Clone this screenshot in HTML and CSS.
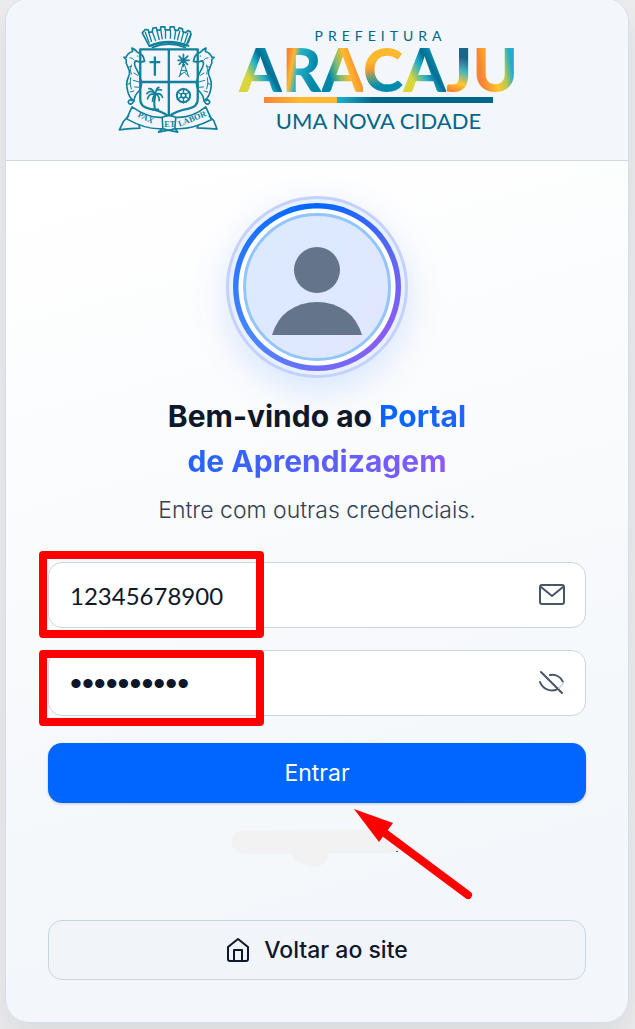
FILE: index.html
```html
<!DOCTYPE html>
<html lang="pt-BR">
<head>
  <meta charset="UTF-8" />
  <meta name="viewport" content="width=device-width, initial-scale=1.0"/>
  <title>Portal de Aprendizagem</title>
  <link rel="stylesheet" href="styles.css">
</head>
<body>

  <main class="card">
    <header class="brand">
      <svg class="crest" viewBox="24 30 304 330" fill="none" stroke="#12809b" stroke-width="5" stroke-linecap="round" stroke-linejoin="round" aria-hidden="true">
        <!-- mural crown -->
        <path d="M97 53l9-10 9 1 2 8 10-2 2-11 10-2 3 9 10-2 1-9h12l1 9h14l1-9h12l2 10 10 1 3-8 10 3 1 9 9 3 6-7 8 4 1 8-14 34q-57-20-111 1z" />
        <path d="M116 51l9 28M127 49l10 27M141 46l7 27M153 44l4 27M167 44v25M182 44v25M198 45l-4 26M210 48l-7 26M222 50l-8 28M234 54l-9 28M244 58l-8 25M106 51l12 33" stroke-width="4" />
        <path d="M128 97q48-20 98 0M120 92q55-24 116 0" stroke-width="6" />
        <!-- shield -->
        <path d="M91 103h173v150q0 23-27 28-40 7-60 24-20-17-60-24-26-5-26-28zM177 103v202M91 201h173" stroke-width="7" />
        <path d="M135 124v58M119 141h32" stroke-width="7" stroke-linecap="butt" />
        <!-- windmill -->
        <path d="M221 136v-18M221 136l13-13M221 136h17M221 136l12 12M221 136v18M221 136l-13 12M221 136h-16M221 136l-13-13" stroke-width="5" />
        <path d="M219 148l-10 36M224 148l12 36M214 166h15M212 178l20-10M207 184l9-7M238 184l-10-8" stroke-width="3" />
        <!-- palm -->
        <path d="M136 240q-5 24-1 43M128 284h17" stroke-width="6" />
        <path d="M136 237q-14-15-25-1M136 237q-19-3-23 15M136 237q-7 7-8 22M136 237q2-17 19-12M136 237q17-5 22 10M136 237q13 4 12 20M134 236q-6-16-17-15M137 235q2-17 10-18" stroke-width="5" />
        <!-- wheel -->
        <circle cx="221" cy="242" r="20" stroke-width="6" />
        <circle cx="221" cy="242" r="7" />
        <path d="M221 220v15M221 249v15M202 231l13 7M227 246l13 7M240 231l-13 7M215 246l-13 7" stroke-width="4" />
        <!-- seahorses -->
        <g id="seahorse">
          <path d="M104 138q-3-21-22-27-7-9-16-12l2 10q-15 4-19 17l-7 1 7 7q-3 10 4 20l5 13q3 10-3 20-8 17-3 36 4 24 20 35-6 12-13 9-7-4-2-10 5-4 8 0" />
          <path d="M103 139q-13 4-25-2-8 6-1 20 11 18 17 41 3 18-7 30-14 14-15 30" />
          <path d="M82 123h2M60 128q8-1 13 7M64 150q-6 14 0 27M62 188q-5 17 2 34M72 174l11 7M70 196l18 5M74 216l14 1M57 156l8-3M53 208l9-3M61 231l11-3" stroke-width="3" />
        </g>
        <use href="#seahorse" transform="matrix(-1 0 0 1 355 0)" />
        <!-- ribbon -->
        <path d="M66 276q51 35 91 31l2 34q-48 5-109-29zM288 276q-42 35-90 31l-3 34q49 5 111-27zM157 307q21-10 41 0l-3 34q-17 9-36 0z" fill="#f3f7fd" />
        <path d="M56 303l-15 16-13 26q38-4 62-5l-3-9M299 304l13 13 10 26q-37-3-60-4l4-8M159 341l-13 11 30-6 28 6-8-11" />
        <g class="motto">
          <text x="82" y="305" transform="rotate(26 82 305)">PAX</text>
          <text x="163" y="337">ET</text>
          <text x="209" y="336" transform="rotate(-22 209 336)">LABOR</text>
        </g>
      </svg>

      <div class="wordmark">
        <span class="prefeitura">PREFEITURA</span>
        <span class="aracaju"><span class="l1">A</span><span class="l2">R</span><span class="l3">A</span><span class="l4">C</span><span class="l5">A</span><span class="l6">J</span><span class="l7">U</span></span>
        <span class="stripe"></span>
        <span class="slogan">UMA NOVA CIDADE</span>
      </div>
    </header>

    <section class="login">
      <div class="avatar">
        <div class="avatar-ring">
          <svg viewBox="0 0 142 142" aria-hidden="true">
            <circle cx="71" cy="54" r="23" />
            <path d="M26 119q5-16 16-24 13-9 29-9t29 9q11 8 16 24z" />
          </svg>
        </div>
      </div>

      <h1>Bem-vindo ao <span>Portal<br>de Aprendizagem</span></h1>
      <p class="subtitle">Entre com outras credenciais.</p>

      <form id="loginForm">
        <div class="field">
          <input type="text" id="usuario" value="12345678900" aria-label="Identificação de usuário" />
          <svg class="icon" viewBox="0 0 26 26" aria-hidden="true">
            <rect x="1" y="3" width="24" height="19" rx="2" />
            <path d="M2 5l11 9L24 5" />
          </svg>
          <span class="mark"></span>
        </div>

        <div class="field">
          <input type="password" id="senha" value="abcdefghij" aria-label="Senha" />
          <button type="button" class="toggle" aria-label="Mostrar senha">
            <svg class="icon" viewBox="0 0 26 26" aria-hidden="true">
              <path d="M2 2l21 21M11 5c6-1 11 2 13 7M1 12c3 8 13 11 19 6" />
              <path class="faint" d="M24 13q-1 3-4 5" />
            </svg>
          </button>
          <span class="mark"></span>
        </div>

        <button type="submit" class="enter">Entrar</button>
      </form>

      <div class="erased">
        <svg class="smudge" viewBox="0 0 170 39" aria-hidden="true">
          <path d="M13 1L156 0q14 2 13 12 0 11-10 12H96q0 14-16 14-19-4-20-13H13Q0 24 0 13 0 2 13 1z" />
          <path class="speck" d="M164 22h2v1h-2z" />
        </svg>
        <svg class="arrow" viewBox="0 0 120 92" aria-hidden="true">
          <path class="shaft" d="M28 22L114 86" />
          <path d="M0 0l39 14-14 19z" />
        </svg>
      </div>

      <a class="back" href="#">
        <svg viewBox="0 0 24 26" aria-hidden="true">
          <path d="M2 10L12 2l10 8v12q0 2-2 2H4q-2 0-2-2z" />
          <path d="M8 24V13h8v11" />
        </svg>
        Voltar ao site
      </a>
    </section>
  </main>

</body>
</html>
```
FILE: styles.css
```css
* { box-sizing: border-box; }

body {
  margin: 0;
  padding: 0 6px 7px 5px;
  background: #ececee;
  color: #0f172a;
  font-family: Inter, sans-serif;
}

.card {
  margin-top: -2px;
  border: 1px solid #d3deeb;
  border-radius: 24px;
  overflow: hidden;
  background: linear-gradient(165deg, #ffffff 16%, #f8fafc 55%, #f3f7fb 85%);
  box-shadow: 0 16px 32px rgba(15, 23, 42, 0.08);
}

/* brand */
.brand {
  display: flex;
  justify-content: center;
  gap: 22px;
  padding: 26px 20px 25px;
  background: #f3f6fb;
  border-bottom: 1px solid #cbd8e6;
}

.crest {
  width: 101px;
  height: 110px;
}

.motto {
  fill: #12809b;
  stroke: none;
  font-family: "Liberation Serif", serif;
  font-size: 25px;
  font-weight: bold;
}

.wordmark {
  display: flex;
  flex-direction: column;
  align-items: center;
  width: 275px;
  height: 110px;
  color: #00668a;
  font-family: Lato, sans-serif;
}

.prefeitura {
  padding-left: 4px;
  font-size: 14px;
  line-height: 22px;
  letter-spacing: 5px;
}

.aracaju {
  font-size: 61px;
  line-height: 44px;
  font-weight: 900;
  white-space: nowrap;
}

.aracaju span {
  -webkit-background-clip: text;
  background-clip: text;
  color: transparent;
}

.l1 { background-image: linear-gradient(60deg, #d9d53b 30%, #22aecb 48%, #006f93 58%, #1ea8c4 80%); }
.l2 { background-image: linear-gradient(100deg, #f78536 20%, #fdb92e 30%, #27b1cb 42%, #0087a8 75%); }
.l3 { background-image: linear-gradient(75deg, #0087a8 25%, #7cbf6e 42%, #fdb92e 58%, #f78536 80%); }
.l4 { background-image: linear-gradient(170deg, #fdb92e 38%, #f99a30 48%, #5c9d80 60%, #008bad 72%); }
.l5 { background-image: linear-gradient(60deg, #d9d53b 28%, #22aecb 46%, #006f93 58%, #1ea8c4 80%); }
.l6 { background-image: linear-gradient(200deg, #1c6488 35%, #48b6bd 52%, #ffc62b 68%, #f78536 80%); }
.l7 { background-image: linear-gradient(80deg, #f78536 25%, #ffc62b 50%, #b9ca4b 65%, #22aecb 78%); }

.stripe {
  width: 229px;
  height: 6px;
  margin-top: 6px;
  background: linear-gradient(90deg, #f78536, #fdb92e 16% 32%, #22aecb 32%, #00668a 48%);
}

.slogan {
  margin-top: 4px;
  font-size: 22px;
  line-height: 28px;
  white-space: nowrap;
}

/* login */
.login {
  padding: 35px 42px 42px;
  text-align: center;
}

.avatar {
  width: 182px;
  height: 182px;
  margin: 0 auto 16px;
  padding: 4px;
  border-radius: 50%;
  border: 3px solid #c5d0fd;
  background: #e8f1ff;
  box-shadow: 0 12px 36px rgba(0, 102, 255, 0.15);
}

.avatar-ring {
  height: 100%;
  padding: 10px;
  border-radius: 50%;
  background:
    radial-gradient(circle, #ffffff 78px, transparent 79px),
    conic-gradient(#0066ff, #6366f1 20%, #8b5cf6 35%, #6d6cfa 50%, #4a86ff 65%, #0066ff);
}

.avatar-ring svg {
  display: block;
  width: 100%;
  height: 100%;
  border: 3px solid #93c5fd;
  border-radius: 50%;
  background: linear-gradient(135deg, #dbeafe, #e0e7ff);
  fill: #64748b;
}

h1 {
  margin: 0;
  font-size: 30px;
  line-height: 45px;
  font-weight: 700;
}

h1 span {
  background: linear-gradient(90deg, #0066ff, #8b5cf6);
  -webkit-background-clip: text;
  background-clip: text;
  color: transparent;
}

.subtitle {
  margin: 10px 0 36px;
  color: #334155;
  font-size: 23px;
  font-weight: 300;
  line-height: 32px;
}

.field {
  position: relative;
  margin-bottom: 22px;
}

.field input {
  display: block;
  width: 100%;
  height: 66px;
  padding: 0 70px 0 21px;
  border: 1px solid #cbd5e1;
  border-radius: 14px;
  background: #ffffff;
  color: #0f172a;
  font-family: Lato, sans-serif;
  font-size: 24px;
}

.field input[type="password"] {
  font-family: "Liberation Sans", sans-serif;
  font-size: 34px;
}

.icon {
  display: block;
  width: 26px;
  height: 26px;
  fill: none;
  stroke: #475569;
  stroke-width: 2;
  stroke-linecap: round;
  stroke-linejoin: round;
}

.icon .faint { stroke: #d5d9e0; }

.field > .icon,
.toggle {
  position: absolute;
  top: 20px;
  right: 21px;
}

.toggle {
  padding: 0;
  border: none;
  background: none;
  cursor: pointer;
}

/* red highlights over the form */
.mark {
  position: absolute;
  top: -11px;
  left: -9px;
  width: 225px;
  height: 87px;
  border: 8px solid #ff0000;
  border-radius: 4px;
  pointer-events: none;
}

.field + .field .mark {
  top: 0;
  height: 76px;
}

.enter {
  display: block;
  width: 100%;
  height: 60px;
  margin-top: 27px;
  border: none;
  border-radius: 14px;
  background: #0066ff;
  box-shadow: 0 1px 3px rgba(15, 23, 42, 0.2);
  color: #ffffff;
  font-family: inherit;
  font-size: 23px;
  cursor: pointer;
}

.erased {
  position: relative;
  width: 170px;
  height: 39px;
  margin: 26px auto 52px;
}

.smudge {
  display: block;
  width: 170px;
  height: 39px;
  fill: #f2f2f2;
}

.speck { fill: #0066cc; }

.arrow {
  position: absolute;
  top: -20px;
  left: 122px;
  width: 120px;
  height: 92px;
  fill: #ff0000;
}

.shaft {
  stroke: #ff0000;
  stroke-width: 8;
  stroke-linecap: round;
}

.back {
  display: flex;
  align-items: center;
  justify-content: center;
  gap: 14px;
  height: 60px;
  border: 1px solid #cbd5e1;
  border-radius: 14px;
  background: #f1f5fa;
  color: #0f172a;
  font-size: 23px;
  font-weight: 500;
  text-decoration: none;
}

.back svg {
  width: 24px;
  height: 26px;
  fill: none;
  stroke: #0f172a;
  stroke-width: 2;
  stroke-linejoin: round;
}
```
